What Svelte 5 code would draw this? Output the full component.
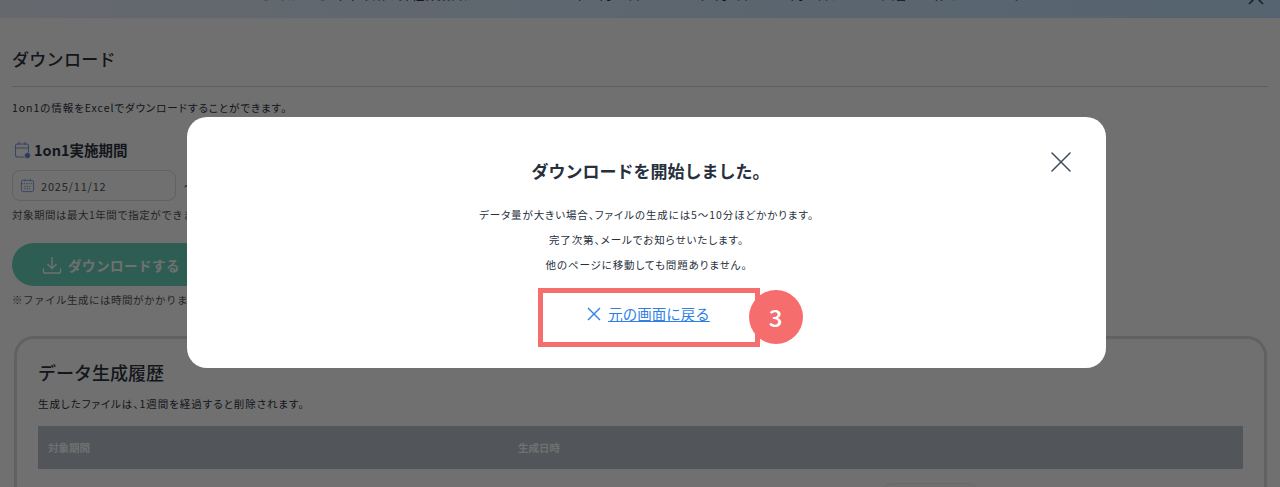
<script>
    const lines = [
        'データ量が大きい場合、ファイルの生成には5〜10分ほどかかります。',
        '完了次第、メールでお知らせいたします。',
        '他のページに移動しても問題ありません。'
    ];
</script>

<div class="page">
    <div class="banner">
        <span class="banner-text">【お知らせ】年末年始の弊社休業日につきまして 2025年12月27日から2026年1月4日まで お問い合わせへの回答はお休みいたします</span>
        <svg class="banner-close" viewBox="0 0 20 20" width="20" height="20"><path d="M3 -10 L17 4 M17 -10 L3 4" stroke="#3c4654" stroke-width="1.6" fill="none" /></svg>
    </div>

    <main class="content">
        <h1>ダウンロード</h1>
        <p class="lead">1on1の情報をExcelでダウンロードすることができます。</p>

        <h2 class="label">
            <svg viewBox="0 0 18 18" width="18" height="18" fill="none" stroke="#7f9fe0" stroke-width="1.1">
                <rect x="1.5" y="3" width="13" height="13" rx="2" />
                <path d="M1.5 7h13M5 1v3M11 1v3" />
                <circle cx="13.5" cy="14.500" r="3" fill="#5b84d8" stroke="#fff" stroke-width=".8" />
            </svg>
            1on1実施期間
        </h2>
        <div class="dates">
            <div class="date-input">
                <svg viewBox="0 0 16 16" width="15" height="15" fill="none" stroke="#7f9fe0" stroke-width="1">
                    <rect x="1.5" y="2.5" width="13" height="12" rx="1.5" />
                    <path d="M1.5 6h13M5 1v3M11 1v3M4.5 9h7M4.5 11.500h7" stroke-dasharray="1.500 1" />
                </svg>
                2025/11/12
            </div>
            <span class="tilde">〜</span>
        </div>
        <p class="note">対象期間は最大1年間で指定ができます。</p>

        <button class="download">
            <svg viewBox="0 0 20 20" width="20" height="20" fill="none" stroke="#fff" stroke-width="1.4">
                <path d="M10 2v11M5.500 9l4.500 4.500L14.500 9M1.500 13.500v3.500a1 1 0 0 0 1 1h15a1 1 0 0 0 1-1v-3.500" />
            </svg>
            ダウンロードする
        </button>
        <p class="note after">※ファイル生成には時間がかかります。</p>

        <section class="history">
            <h2>データ生成履歴</h2>
            <p class="lead">生成したファイルは、1週間を経過すると削除されます。</p>
            <div class="thead">
                <span>対象期間</span>
                <span>生成日時</span>
            </div>
            <div class="row">
                <span class="row-btn"></span>
            </div>
        </section>
    </main>
</div>

<div class="overlay">
    <div class="modal">
        <button class="close" aria-label="閉じる">
            <svg viewBox="0 0 20 20" width="20" height="20" fill="none" stroke="#3f4a5c" stroke-width="1.500" stroke-linecap="round">
                <path d="M1 1 L19 19 M19 1 L1 19" />
            </svg>
        </button>
        <h3>ダウンロードを開始しました。</h3>
        {#each lines as line}
            <p>{line}</p>
        {/each}
        <div class="callout">
            <a href="#back">
                <svg viewBox="0 0 14 14" width="14" height="14" fill="none" stroke="#2f7fe6" stroke-width="1.400">
                    <path d="M1 1 L13 13 M13 1 L1 13" />
                </svg>
                <span>元の画面に戻る</span>
            </a>
            <span class="badge">3</span>
        </div>
    </div>
</div>

<style>
    :global(body) {
        margin: 0;
        font-family: "Noto Sans CJK JP", "Noto Sans", sans-serif;
        background: #fff;
        overflow: hidden;
    }

    .page {
        height: 487px;
        overflow: hidden;
        color: #2c3440;
    }

    .banner {
        height: 18px;
        overflow: hidden;
        position: relative;
        background: linear-gradient(90deg, #e6eefa, #c2e3ff);
        text-align: center;
        font-size: 13px;
        line-height: 12px;
    }

    .banner-text {
        position: relative;
        top: -12px;
        white-space: nowrap;
    }

    .banner-close {
        position: absolute;
        top: 0;
        right: 14px;
    }

    .content {
        padding: 0 12px;
    }

    h1 {
        margin: 0;
        padding: 27px 0 14px;
        font-size: 17px;
        line-height: 27px;
        font-weight: 500;
        letter-spacing: .3px;
        border-bottom: 1px solid #d6d6d6;
    }

    .lead {
        margin: 13px 0 0;
        font-size: 10.500px;
        line-height: 16px;
        letter-spacing: .95px;
        font-feature-settings: "palt";
    }

    .label {
        display: flex;
        align-items: center;
        gap: 2px;
        margin: 24px 0 0 2px;
        font-size: 14.500px;
        line-height: 20px;
        font-weight: 700;
    }

    .dates {
        display: flex;
        align-items: center;
        gap: 8px;
        margin-top: 10px;
    }

    .date-input {
        display: flex;
        align-items: center;
        gap: 6px;
        box-sizing: border-box;
        width: 164px;
        height: 31px;
        padding-left: 7px;
        border: 1px solid #d8dde3;
        border-radius: 8px;
        font-size: 11px;
        letter-spacing: .8px;
        color: #555;
    }

    .tilde {
        font-size: 11px;
    }

    .note {
        margin: 6px 0 0;
        font-size: 10.500px;
        line-height: 16px;
        letter-spacing: .5px;
        color: #555;
    }

    .note.after {
        margin-top: 6px;
    }

    .download {
        display: flex;
        align-items: center;
        gap: 6px;
        box-sizing: border-box;
        width: 260px;
        height: 43px;
        margin-top: 20px;
        padding-left: 30px;
        border: none;
        border-radius: 22px;
        background: #6ad4c0;
        color: #fff;
        font-family: inherit;
        font-size: 13.500px;
        font-weight: 700;
        letter-spacing: .5px;
    }

    .history {
        box-sizing: border-box;
        margin: 28px 1px 0 2px;
        padding: 20px 21px 0;
        height: 200px;
        border: 3px solid #dedede;
        border-radius: 20px;
    }

    .history h2 {
        margin: 0;
        font-size: 18px;
        line-height: 26px;
        font-weight: 500;
    }

    .history .lead {
        margin: 11px 0 0;
    }

    .thead {
        display: grid;
        grid-template-columns: 470px 1fr;
        align-items: center;
        height: 43px;
        margin-top: 14px;
        padding-left: 10px;
        background: #bac3cf;
        color: #fff;
        font-size: 10.500px;
        font-weight: 700;
    }

    .row {
        display: flex;
        justify-content: flex-end;
        padding: 14px 264px 0 0;
    }

    .row-btn {
        width: 96px;
        height: 30px;
        border-radius: 10px;
        background: #fbfbfb;
        border: 1px solid #eee;
    }

    .overlay {
        position: fixed;
        inset: 0;
        background: rgba(0, 0, 0, .56);
    }

    .modal {
        position: absolute;
        left: 187px;
        top: 117px;
        box-sizing: border-box;
        width: 919px;
        height: 251px;
        padding-top: 40px;
        display: flex;
        flex-direction: column;
        align-items: center;
        background: #fff;
        border-radius: 20px;
        color: #27303d;
    }

    .close {
        position: absolute;
        top: 35px;
        right: 35px;
        padding: 0;
        width: 20px;
        height: 20px;
        border: none;
        background: none;
    }

    h3 {
        margin: 0 0 17px 8px;
        font-size: 17px;
        line-height: 28px;
        font-weight: 700;
    }

    .modal p {
        margin: 0;
        font-size: 10.500px;
        line-height: 25px;
        letter-spacing: .9px;
        font-feature-settings: "palt";
    }

    .callout {
        position: relative;
        display: flex;
        align-items: center;
        justify-content: center;
        box-sizing: border-box;
        width: 222px;
        height: 59px;
        margin: 11px 0 0 4px;
        padding-bottom: 8px;
        border: 5px solid #f56d6d;
    }

    .callout a {
        display: flex;
        align-items: center;
        gap: 7px;
        color: #2f7fe6;
        font-size: 14.500px;
        line-height: 20px;
    }

    .callout a span {
        text-decoration: underline;
    }

    .badge {
        position: absolute;
        right: -48px;
        top: -3px;
        width: 54px;
        height: 54px;
        border-radius: 50%;
        background: #f56d6d;
        color: #fff;
        font-size: 24px;
        font-weight: 500;
        line-height: 54px;
        text-align: center;
    }
</style>
